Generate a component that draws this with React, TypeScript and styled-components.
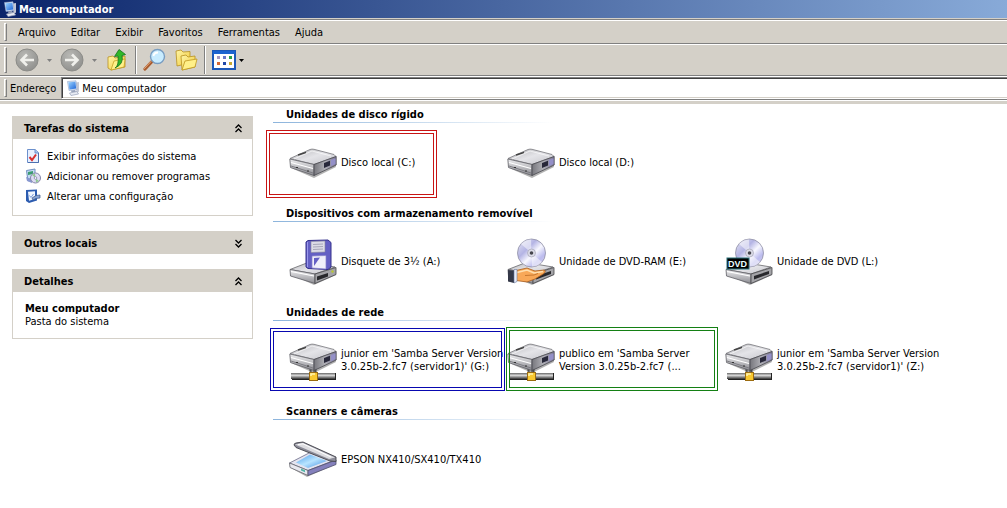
import React, { ReactNode } from 'react';
import styled, { createGlobalStyle } from 'styled-components';

const GlobalStyle = createGlobalStyle`
  *, *::before, *::after { box-sizing: border-box; }
  body {
    margin: 0;
    background: #fff;
    color: #000;
    font: 11px/13px Tahoma, 'DejaVu Sans Condensed', 'DejaVu Sans', sans-serif;
  }
  button, input { font: inherit; color: inherit; }
  a { color: inherit; text-decoration: none; }
  h1, h2, p, ul { margin: 0; padding: 0; font: inherit; list-style: none; }
`;

const Page = styled.div`
  display: flex;
  flex-direction: column;
  min-height: 100vh;
`;

const TitleBar = styled.header`
  display: flex;
  align-items: center;
  gap: 1px;
  height: 19px;
  padding-left: 2px;
  color: #fff;
  background: linear-gradient(to right, #0a246a, #88aad8);
  border-bottom: 1px solid #d4d0c8;
`;

const Title = styled.h1`
  font-weight: bold;
`;

const Chrome = styled.div`
  background: #d4d0c8;
  border-top: 1px solid #808080;

  &::after {
    content: '';
    display: block;
    height: 4px;
    border-top: 1px solid #fff;
  }
`;

const Bar = styled.div<{ $height: number }>`
  display: flex;
  align-items: center;
  height: ${(p) => p.$height}px;
  padding-left: 4px;
  border-top: 1px solid #fff;
  border-bottom: 1px solid #808080;
`;

const Grip = styled.span`
  flex: none;
  align-self: stretch;
  width: 3px;
  margin: 2px 0;
  border: 1px solid;
  border-color: #fff #808080 #808080 #fff;
`;

const Menu = styled.nav`
  display: flex;
  gap: 15px;
  padding-left: 11px;
`;

const FlatButton = styled.button`
  display: flex;
  align-items: center;
  padding: 0;
  border: 0;
  background: none;
`;

const Tools = styled.div<{ $gap: number }>`
  display: flex;
  align-items: center;
  gap: ${(p) => p.$gap}px;
  padding-left: 8px;
`;

const SplitButton = styled.div`
  display: flex;
  align-items: center;
  gap: 3px;
`;

const Separator = styled.span`
  width: 2px;
  height: 28px;
  border-left: 1px solid #808080;
  border-right: 1px solid #fff;
`;

const AddressLabel = styled.label`
  padding: 0 5px 0 3px;
`;

const AddressField = styled.div`
  display: flex;
  flex: 1;
  align-items: center;
  align-self: stretch;
  gap: 1px;
  padding-left: 3px;
  background: #fff;
  border: 1px solid;
  border-color: #808080 #fff #fff #808080;
  border-right: 0;
  box-shadow: inset 1px 1px #404040, inset 0 -1px #d4d0c8;
`;

const AddressInput = styled.input`
  flex: 1;
  min-width: 0;
  padding: 0;
  border: 0;
  outline: 0;
  background: none;
`;

const Body = styled.div`
  display: flex;
  flex: 1;
`;

const Sidebar = styled.aside`
  display: flex;
  flex: none;
  flex-direction: column;
  gap: 15px;
  width: 253px;
  padding: 12px 0 12px 12px;
`;

const PanelHead = styled.div`
  display: flex;
  align-items: center;
  justify-content: space-between;
  height: 23px;
  padding: 2px 10px 0 12px;
  background: #d4d0c8;
`;

const PanelTitle = styled.h2`
  font-weight: bold;
`;

const PanelBody = styled.div`
  padding: 7px 12px 9px;
  border: 1px solid #d4d0c8;
  border-top: 0;
`;

const TaskLink = styled.a`
  display: flex;
  align-items: center;
  gap: 6px;
  height: 20px;
  white-space: nowrap;
`;

const Details = styled.div`
  padding: 3px 0 1px;
`;

const Strong = styled.p`
  font-weight: bold;
`;

const Main = styled.main`
  flex: 1;
  min-width: 0;
  padding: 4px 0 0 20px;
`;

const Group = styled.section`
  min-height: 99px;
`;

const GroupTitle = styled.h2`
  width: 280px;
  height: 15px;
  padding-left: 13px;
  font-weight: bold;
  white-space: nowrap;
  border-bottom: 1px solid;
  border-image: linear-gradient(to right, #8cb4dc, #ffffff) 1;
`;

const Items = styled.ul`
  display: grid;
  grid-template-columns: repeat(auto-fill, 218px);
  padding: 15px 0 0 16px;
`;

const Item = styled.li`
  position: relative;
`;

const ItemLink = styled.a`
  display: flex;
  align-items: center;
  gap: 4px;
  height: 48px;
`;

const ItemName = styled.span`
  white-space: pre;
`;

interface MarkBox {
  color: string;
  left: number;
  top: number;
  width: number;
  height: number;
}

const Mark = styled.span<{ $box: MarkBox }>`
  position: absolute;
  left: ${(p) => p.$box.left}px;
  top: ${(p) => p.$box.top}px;
  width: ${(p) => p.$box.width}px;
  height: ${(p) => p.$box.height}px;
  border: 4px double ${(p) => p.$box.color};
  pointer-events: none;
`;

const Icon = styled.svg`
  flex: none;
  display: block;
`;

const SharedDefs = styled(Icon)`
  position: absolute;
`;

const Defs = () => (
  <SharedDefs width="0" height="0" aria-hidden="true">
    <defs>
      <linearGradient id="top" x1="0" y1="0" x2="1" y2="1">
        <stop offset="0" stopColor="#b4b4b8" />
        <stop offset=".5" stopColor="#e4e4e8" />
        <stop offset="1" stopColor="#c4c4ca" />
      </linearGradient>
      <linearGradient id="front" x1="0" y1="0" x2="0" y2="1">
        <stop offset="0" stopColor="#eeeef0" />
        <stop offset="1" stopColor="#8c8c92" />
      </linearGradient>
      <linearGradient id="side" x1="0" y1="0" x2="1" y2="0">
        <stop offset="0" stopColor="#77777d" />
        <stop offset=".5" stopColor="#b0b0b6" />
        <stop offset="1" stopColor="#7c7898" />
      </linearGradient>
      <linearGradient id="disc" x1="0" y1="0" x2="1" y2="1">
        <stop offset="0" stopColor="#e8e8f4" />
        <stop offset=".35" stopColor="#b4b4e4" />
        <stop offset=".55" stopColor="#f8f8ff" />
        <stop offset=".75" stopColor="#bcbcee" />
        <stop offset="1" stopColor="#d8d0ee" />
      </linearGradient>
      <linearGradient id="glass" x1="0" y1="0" x2="1" y2="1">
        <stop offset="0" stopColor="#4a9be8" />
        <stop offset=".5" stopColor="#b8e4ff" />
        <stop offset="1" stopColor="#3c8ae0" />
      </linearGradient>
      <linearGradient id="pipe" x1="0" y1="0" x2="0" y2="1">
        <stop offset="0" stopColor="#666" />
        <stop offset=".4" stopColor="#d8d8d8" />
        <stop offset="1" stopColor="#333" />
      </linearGradient>
      <linearGradient id="folder" x1="0" y1="0" x2="1" y2="1">
        <stop offset="0" stopColor="#fff6a8" />
        <stop offset="1" stopColor="#f0c838" />
      </linearGradient>
      <radialGradient id="knob" cx=".4" cy=".3" r=".8">
        <stop offset="0" stopColor="#b8b8b4" />
        <stop offset="1" stopColor="#8c8c8a" />
      </radialGradient>
      <linearGradient id="screen" x1="0" y1="0" x2="1" y2="1">
        <stop offset="0" stopColor="#9cd4ff" />
        <stop offset="1" stopColor="#1c64d8" />
      </linearGradient>
    </defs>
  </SharedDefs>
);

const Big = ({ children }: { children: ReactNode }) => (
  <Icon width="48" height="48" viewBox="0 0 48 48" aria-hidden="true">{children}</Icon>
);

const HardDrive = () => (
  <>
    <path d="M2 30L25 40L47 29L46 25L24 34Z" fill="#000" opacity=".3" />
    <path d="M1 20.500L21 11.500Q23 10.800 25 11.300L45 16.500L47 18.500L25 26.500Z" fill="url(#top)" stroke="#77777c" strokeWidth=".8" />
    <path d="M.8 21L25 26.500V37.500L1.500 29.500Z" fill="url(#front)" stroke="#606066" strokeWidth=".8" />
    <path d="M25 26.500L47.200 18.500V27L25 37.500Z" fill="url(#side)" stroke="#48484e" strokeWidth=".8" />
    <path d="M2 24.500L24 30.500" stroke="#fff" strokeWidth="1.200" />
    <path d="M2 28L24 35" stroke="#7c7c82" />
    <path d="M35 25L41 22.800V27.500L35 30Z" fill="#28283a" />
    <path d="M42 22L46.500 20.500V26L42 28Z" fill="#9490c8" />
    <path d="M9 17L17 14.500" stroke="#444" strokeWidth="1.500" />
    <path d="M7 29.500h2M18 33h2" stroke="#333" strokeWidth="1.200" />
    <path d="M5 21L23 13L42 18" stroke="#fff" strokeWidth=".8" fill="none" opacity=".8" />
  </>
);

const DiskIcon = () => <Big><HardDrive /></Big>;

const NetworkIcon = () => (
  <Big>
    <path d="M21 31h6v7h-6z" fill="#8c8c8c" stroke="#444" strokeWidth=".8" />
    <path d="M23.500 32v5" stroke="#eee" strokeWidth="1.500" />
    <g transform="translate(0 -3)"><HardDrive /></g>
    <rect x="2" y="37" width="45" height="6" fill="url(#pipe)" />
    <path d="M3 43.500H47" stroke="#222" />
    <path d="M46.500 37v6" stroke="#222" />
    <rect x="20.500" y="36.500" width="8" height="8" fill="#f8c830" stroke="#9c6c10" />
    <path d="M22 40V38H26" stroke="#fff4b0" strokeWidth="1.500" fill="none" />
  </Big>
);

const BayDrive = ({ slot }: { slot: string }) => (
  <>
    <path d="M3 38L25 48L47 38L46 33L26 42Z" fill="#000" opacity=".3" />
    <path d="M1 32.500L19 25.500L46 30L26 37Z" fill="url(#top)" stroke="#68686c" strokeWidth=".8" />
    <path d="M1 32.500L26 37V46.500L1.500 39Z" fill="url(#front)" stroke="#606066" strokeWidth=".8" />
    <path d="M26 37L47 30.500V37.500L26 46.500Z" fill="#a4a4a8" stroke="#444448" strokeWidth=".8" />
    <path d="M2 34.500L25 39" stroke="#fff" strokeWidth="1.200" />
    <path d={slot} fill="#28282c" />
  </>
);

const FloppyIcon = () => (
  <Big>
    <BayDrive slot="M28 39.500L39 36V39.500L28 43.500Z" />
    <path d="M17 5L19 3.500L39 3L42 5.500V30L39 32.500L19 31.500L17 30Z" fill="#6460c4" stroke="#34308c" />
    <path d="M22 4.500L36 4V15L22 15.500Z" fill="#dcdce6" stroke="#88889c" strokeWidth=".6" />
    <path d="M24 7.500L34 7M24 10L34 9.500M24 12.500L34 12" stroke="#9898ac" strokeWidth=".8" />
    <path d="M23 19L37 18.500V32L23 31Z" fill="#f0f0fa" stroke="#8480c8" strokeWidth=".7" />
    <path d="M25 21L31 20.500L25 29Z" fill="#6460c4" />
    <path d="M18.500 5V30" stroke="#9a98ec" />
    <circle cx="43.500" cy="34.500" r="1.200" fill="#b8c830" />
  </Big>
);

const Disc = () => (
  <>
    <circle cx="24.500" cy="16" r="14" fill="url(#disc)" stroke="#9090a4" strokeWidth=".8" />
    <path d="M24.500 16L14 7Q18 2.500 24 2.500Z" fill="#fff" opacity=".5" />
    <path d="M24.500 16L35 25Q31 29.500 25 29.500Z" fill="#fff" opacity=".5" />
    <circle cx="24.500" cy="16" r="4" fill="#dcdce8" stroke="#a4a4b4" strokeWidth=".7" />
    <circle cx="24.500" cy="16" r="1.800" fill="#44444c" />
  </>
);

const SharedDvdIcon = () => (
  <Big>
    <BayDrive slot="M29 39L44 34V37L29 42.500Z" />
    <Disc />
    <path d="M9 33.500L20 31L28 34L37 33Q39.500 33.500 37 36.500L28 42L20 45L9 43.500Z" fill="#f8a858" stroke="#a85c1c" strokeWidth=".8" />
    <path d="M10 35.500L20 33L27 36L36 34.500" stroke="#ffe0b0" strokeWidth="1.500" fill="none" />
    <path d="M18 38.500L27 38L31 36.500" stroke="#c87830" fill="none" />
    <path d="M1 33L7 33.500V46L1 44.500Z" fill="#343848" />
    <path d="M7 32.500L10 32.500V44.500L7 46Z" fill="#e8ecf8" stroke="#6878a0" strokeWidth=".6" />
  </Big>
);

const DvdLabel = styled.text`
  font: bold 9px 'Liberation Sans', Arial, sans-serif;
`;

const DvdIcon = () => (
  <Big>
    <BayDrive slot="M29 39L44 34V37L29 42.500Z" />
    <Disc />
    <rect x="2" y="21" width="22" height="11" fill="#000" stroke="#287078" />
    <DvdLabel x="3" y="30" fill="#e8ffff">DVD</DvdLabel>
  </Big>
);

const ScannerIcon = () => (
  <Big>
    <path d="M2 33L18 42L45 30L42 26Z" fill="#000" opacity=".3" />
    <path d="M.5 28L21 17.500L46 25L19 35.500Z" fill="#e4e4f0" stroke="#6c6c88" strokeWidth=".8" />
    <path d="M7 27.500L21 19.500L38 26L19 33Z" fill="url(#glass)" />
    <path d="M.5 28L19 35.500V40.500L1 32.500Z" fill="#e8e8f0" stroke="#66666c" strokeWidth=".8" />
    <path d="M19 35.500L47 25V29.500L19 40.500Z" fill="#8480bc" stroke="#50506c" strokeWidth=".8" />
    <path d="M5 10Q5 8 8 7.800L14 7L47 22V26.500L41 26L7 12.500Z" fill="#8c8c98" stroke="#44444c" strokeWidth=".9" />
    <path d="M6 9.500L14 8L46 22.500L40 24Z" fill="#dcdce0" />
    <path d="M9 9.500L14 8.800L42 22" stroke="#fff" fill="none" />
    <path d="M12 35.500l4 1.800v-2l-4-1.800z" fill="#50b8a8" />
  </Big>
);

const ComputerIcon = () => (
  <Icon width="16" height="16" viewBox="0 0 16 16" aria-hidden="true">
    <path d="M11 2.500L14 2V11.500L11.500 13Z" fill="#c4c8d4" />
    <path d="M2.500 1.500L11 .8L12 9.500L4 10.500Z" fill="#dce8f8" stroke="#90a4c8" strokeWidth=".6" />
    <path d="M3.300 2.300L10.400 1.800L11.200 8.600L4.500 9.500Z" fill="url(#screen)" />
    <path d="M6 10.500L10 10L11 12L6.500 12.500Z" fill="#98a4bc" />
    <path d="M4.500 13L12 11.500L13.500 14L6 15.500Z" fill="#e8ecf4" stroke="#98a0b8" strokeWidth=".7" />
  </Icon>
);

const RoundArrow = ({ d }: { d: string }) => (
  <Icon width="24" height="24" viewBox="0 0 24 24" aria-hidden="true">
    <circle cx="12" cy="12" r="11" fill="url(#knob)" stroke="#8c8c88" />
    <path d={d} fill="none" stroke="#f0f0ec" strokeWidth="2.600" />
  </Icon>
);

const Caret = ({ color }: { color: string }) => (
  <Icon width="5" height="3" viewBox="0 0 5 3" aria-hidden="true">
    <path d="M0 0H5L2.500 3Z" fill={color} />
  </Icon>
);

const UpIcon = () => (
  <Icon width="22" height="24" viewBox="-2 0 22 24" aria-hidden="true">
    <path d="M1 9L6 8L8 10L18 8V19L4 22L1 20Z" fill="url(#folder)" stroke="#b89020" strokeWidth=".8" />
    <path d="M4 22L7 13L18 11L17 19Z" fill="#fff088" stroke="#c09820" strokeWidth=".7" />
    <path d="M8 20Q12 18 11 8L7.500 8.500L12 1.500L18.500 6.500L15 7.500Q17 16 8 20Z" fill="#30b828" stroke="#14701c" strokeWidth=".8" />
  </Icon>
);

const SearchIcon = () => (
  <Icon width="23" height="24" viewBox="1 0 23 24" aria-hidden="true">
    <path d="M3 21L10 13.500" stroke="#a85c30" strokeWidth="3.200" strokeLinecap="round" />
    <path d="M2.500 20.500L9 13.500" stroke="#e8a878" strokeLinecap="round" />
    <circle cx="15.500" cy="8.500" r="7" fill="#c8ecff" stroke="#789cc0" strokeWidth="1.400" />
    <path d="M11.500 8Q12 4.500 16 4.500" stroke="#fff" strokeWidth="1.800" fill="none" />
  </Icon>
);

const FoldersIcon = () => (
  <Icon width="26" height="22" viewBox="-3 0 26 22" aria-hidden="true">
    <path d="M1 2L6 1L8 3L15 2.500V14L2 17Z" fill="url(#folder)" stroke="#b89020" strokeWidth=".8" />
    <path d="M6 7L11 6L13 8L20 7V18L7 21Z" fill="url(#folder)" stroke="#b89020" strokeWidth=".8" />
    <path d="M7 21L10 12L22 10L20 18Z" fill="#fff088" stroke="#c09820" strokeWidth=".8" />
  </Icon>
);

const ViewsIcon = () => (
  <Icon width="24" height="20" viewBox="0 0 24 20" aria-hidden="true">
    <rect x="1" y="1" width="22" height="18" fill="#fff" stroke="#1c58b8" strokeWidth="2" />
    <path d="M1 1h22v3H1z" fill="#1c64d0" />
    <path d="M5 6h3v3H5z" fill="#a898c0" /><path d="M11 6h3v3h-3z" fill="#6878c8" /><path d="M17 6h3v3h-3z" fill="#28a048" />
    <path d="M5 12h3v3H5z" fill="#d86830" /><path d="M11 12h3v3h-3z" fill="#2048a8" /><path d="M17 12h3v3h-3z" fill="#c8a830" />
  </Icon>
);

const InfoIcon = () => (
  <Icon width="16" height="16" viewBox="0 0 16 16" aria-hidden="true">
    <path d="M2.500 1.500H10L13.500 4.500V14.500H2.500Z" fill="#e8f0ff" stroke="#6c90cc" />
    <path d="M10 1.500V5H13.500" fill="#a8c4ec" stroke="#6c90cc" />
    <path d="M13.500 5V14.500H3" fill="none" stroke="#4c70b0" />
    <path d="M4.500 9L7 12L11 6.500" fill="none" stroke="#d83030" strokeWidth="2" />
  </Icon>
);

const ProgramsIcon = () => (
  <Icon width="16" height="16" viewBox="0 0 16 16" aria-hidden="true">
    <path d="M1.500 2.500L10 1V9L3 13Z" fill="#c4dcf4" stroke="#7090c0" />
    <path d="M3 4L8 3V6L3 7Z" fill="#3c9c70" />
    <path d="M1 9L7 11V15L2 13Z" fill="#8898d0" />
    <circle cx="10.500" cy="10" r="5" fill="#dcdcf4" stroke="#8484a8" />
    <path d="M10.500 10L7 7L10 5.500ZM10.500 10L14 13L11 14.500Z" fill="#90c890" />
    <circle cx="10.500" cy="10" r="1.300" fill="#fff" stroke="#7878a0" strokeWidth=".7" />
  </Icon>
);

const SettingsIcon = () => (
  <Icon width="16" height="16" viewBox="0 0 16 16" aria-hidden="true">
    <path d="M1 2L12 1.500V12.500L4 15L1 13Z" fill="#2c5cb0" />
    <path d="M3 3.800L10 3.300V11L4 12.800Z" fill="#f0f6ff" />
    <path d="M7 10L11 7.500L15 7V10L11 10.500L8 12Z" fill="#88a4d4" stroke="#3c5888" strokeWidth=".7" />
    <path d="M4.500 7.500L6 9.500L8.500 6" stroke="#7c9cd8" fill="none" />
  </Icon>
);

const Chevrons = ({ up = false }: { up?: boolean }) => (
  <Icon width="9" height="9" viewBox="0 0 9 9" aria-hidden="true">
    <path d={up ? 'M1.500 4L4.500 1L7.500 4M1.500 8L4.500 5L7.500 8' : 'M1.500 1L4.500 4L7.500 1M1.500 5L4.500 8L7.500 5'} fill="none" stroke="#000" strokeWidth="1.300" />
  </Icon>
);

const Panel = ({ title, children }: { title: string; children?: ReactNode }) => (
  <section>
    <PanelHead>
      <PanelTitle>{title}</PanelTitle>
      <FlatButton aria-label={title} aria-expanded={!!children}><Chevrons up={!!children} /></FlatButton>
    </PanelHead>
    {children && <PanelBody>{children}</PanelBody>}
  </section>
);

const menus = ['Arquivo', 'Editar', 'Exibir', 'Favoritos', 'Ferramentas', 'Ajuda'];

const tasks = [
  { label: 'Exibir informações do sistema', icon: <InfoIcon /> },
  { label: 'Adicionar ou remover programas', icon: <ProgramsIcon /> },
  { label: 'Alterar uma configuração', icon: <SettingsIcon /> },
];

interface Entry { name: string; icon: ReactNode; mark?: MarkBox }

const groups: { title: string; items: Entry[] }[] = [
  {
    title: 'Unidades de disco rígido',
    items: [
      { name: 'Disco local (C:)', icon: <DiskIcon />, mark: { color: '#c81414', left: -23, top: -8, width: 171, height: 68 } },
      { name: 'Disco local (D:)', icon: <DiskIcon /> },
    ],
  },
  {
    title: 'Dispositivos com armazenamento removível',
    items: [
      { name: 'Disquete de 3½ (A:)', icon: <FloppyIcon /> },
      { name: 'Unidade de DVD-RAM (E:)', icon: <SharedDvdIcon /> },
      { name: 'Unidade de DVD (L:)', icon: <DvdIcon /> },
    ],
  },
  {
    title: 'Unidades de rede',
    items: [
      { name: "junior em 'Samba Server Version\n3.0.25b-2.fc7 (servidor1)' (G:)", icon: <NetworkIcon />, mark: { color: '#0808b0', left: -19, top: -8, width: 235, height: 63 } },
      { name: "publico em 'Samba Server\nVersion 3.0.25b-2.fc7 (...", icon: <NetworkIcon />, mark: { color: '#148014', left: -1, top: -9, width: 212, height: 64 } },
      { name: "junior em 'Samba Server Version\n3.0.25b-2.fc7 (servidor1)' (Z:)", icon: <NetworkIcon /> },
    ],
  },
  {
    title: 'Scanners e câmeras',
    items: [{ name: 'EPSON NX410/SX410/TX410', icon: <ScannerIcon /> }],
  },
];

export default function App() {
  return (
    <Page>
      <GlobalStyle />
      <Defs />
      <TitleBar>
        <ComputerIcon />
        <Title>Meu computador</Title>
      </TitleBar>
      <Chrome>
        <Bar $height={24}>
          <Grip />
          <Menu>
            {menus.map((m) => <FlatButton key={m}>{m}</FlatButton>)}
          </Menu>
        </Bar>
        <Bar $height={32}>
          <Grip />
          <Tools $gap={8}>
            <FlatButton aria-label="Voltar"><RoundArrow d="M19 12H7M12 6.500L6.500 12L12 17.500" /></FlatButton>
            <FlatButton aria-label="Histórico anterior"><Caret color="#808080" /></FlatButton>
            <FlatButton aria-label="Avançar"><RoundArrow d="M5 12H17M12 6.500L17.500 12L12 17.500" /></FlatButton>
            <FlatButton aria-label="Histórico seguinte"><Caret color="#808080" /></FlatButton>
            <FlatButton aria-label="Acima"><UpIcon /></FlatButton>
          </Tools>
          <Tools $gap={6}>
            <Separator />
            <FlatButton aria-label="Pesquisar"><SearchIcon /></FlatButton>
            <FlatButton aria-label="Pastas"><FoldersIcon /></FlatButton>
            <Separator />
            <SplitButton>
              <FlatButton aria-label="Modos de exibição"><ViewsIcon /></FlatButton>
              <FlatButton aria-label="Escolher modo"><Caret color="#000" /></FlatButton>
            </SplitButton>
          </Tools>
        </Bar>
        <Bar $height={24}>
          <Grip />
          <AddressLabel htmlFor="address">Endereço</AddressLabel>
          <AddressField>
            <ComputerIcon />
            <AddressInput id="address" defaultValue="Meu computador" />
          </AddressField>
        </Bar>
      </Chrome>
      <Body>
        <Sidebar>
          <Panel title="Tarefas do sistema">
            <ul>
              {tasks.map((t) => (
                <li key={t.label}><TaskLink href="#">{t.icon}{t.label}</TaskLink></li>
              ))}
            </ul>
          </Panel>
          <Panel title="Outros locais" />
          <Panel title="Detalhes">
            <Details>
              <Strong>Meu computador</Strong>
              <p>Pasta do sistema</p>
            </Details>
          </Panel>
        </Sidebar>
        <Main>
          {groups.map((g) => (
            <Group key={g.title}>
              <GroupTitle>{g.title}</GroupTitle>
              <Items>
                {g.items.map((item) => (
                  <Item key={item.name}>
                    <ItemLink href="#">{item.icon}<ItemName>{item.name}</ItemName></ItemLink>
                    {item.mark && <Mark $box={item.mark} />}
                  </Item>
                ))}
              </Items>
            </Group>
          ))}
        </Main>
      </Body>
    </Page>
  );
}
